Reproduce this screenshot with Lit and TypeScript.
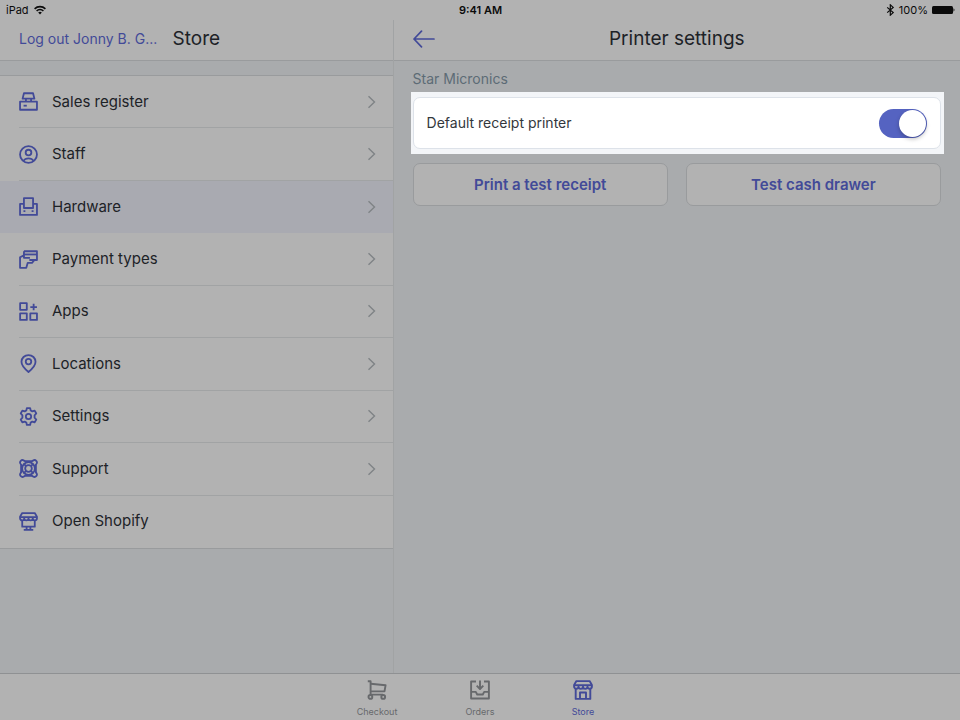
import { LitElement, html, css, svg } from "lit";
import { customElement, property, state } from "lit/decorators.js";
import { classMap } from "lit/directives/class-map.js";

// Icon artwork, drawn on a 20 by 20 grid with stroked lines.
const icons: Record<string, unknown> = {
  register: svg`<path d="M5.200 1.300h9.600l1.400 5.700H3.800z"/><path d="M7.300 7v3M12.700 7v3"/><path d="M1.100 10.200h17.800v8.500H1.100z"/><path d="M4.800 14.400h3.400"/>`,
  staff: svg`<circle cx="10" cy="10" r="8.900"/><circle cx="10" cy="8" r="3"/><path d="M4.600 16.700c1.200-1.900 3-2.700 5.400-2.700s4.200.8 5.400 2.700"/>`,
  hardware: svg`<path d="M5.200 11.600V1.100h9.600v10.500z"/><path d="M5 7.300H1.100v11.600h17.800V7.300H15"/><path d="M4.700 14.800h2M13.300 14.800h2"/>`,
  payment: svg`<path d="M5.200 1.300h13.700v9.200h-8"/><path d="M5.200 1.300v6.900h6.300"/><path d="M5.200 4.700h13.700"/><path d="M5.200 5.600L1.100 7.600v11.200h6.600l1.500-5.300h4.500l2.600-3"/>`,
  apps: svg`<path d="M1.200 1.200h7v7h-7zM1.200 11.900h7v7h-7zM11.900 11.900h7v7h-7z"/><path d="M15.400 1.800v7M11.900 5.300h7"/>`,
  locations: svg`<path d="M10 18.900S2.600 12.900 2.600 8.200a7.400 7.100 0 0 1 14.800 0c0 4.700-7.400 10.700-7.400 10.700z"/><circle cx="10" cy="8" r="2.900"/>`,
  settings: svg`<path d="M8.300 1.100h3.400l.6 2.500 1.700 1 2.500-.8 1.700 3-1.800 1.900v2.600l1.800 1.900-1.700 3-2.500-.8-1.700 1-.6 2.500H8.300l-.6-2.500-1.700-1-2.500.8-1.700-3 1.800-1.900V8.700L1.800 6.800l1.700-3 2.500.8 1.700-1z"/><circle cx="10" cy="10" r="2.800"/>`,
  support: svg`<circle cx="10" cy="10" r="6.700"/><circle cx="10" cy="10" r="3.500"/><path d="M6.200 3A2.600 2.600 0 1 0 3 6.200M13.800 3A2.600 2.600 0 1 1 17 6.200M6.200 17A2.600 2.600 0 1 1 3 13.800M13.800 17A2.600 2.600 0 1 0 17 13.800"/><path d="M6 2.200h8M6 17.800h8M2.200 6v8M17.800 6v8"/><path d="M5.200 5.200l2.200 2.200M14.800 5.200l-2.200 2.200M5.200 14.800l2.200-2.200M14.800 14.800l-2.200-2.200"/>`,
  shopify: svg`<path d="M3.400 1.100h13.200L18.900 5v1.600a2.200 2.200 0 0 1-4.400 0 2.200 2.200 0 0 1-4.500 0 2.200 2.200 0 0 1-4.500 0 2.200 2.200 0 0 1-4.400 0V5z"/><path d="M1.500 5.400h17"/><path d="M3.400 9v6.400h13.200V9"/><path d="M8 15.500v3M12 15.500v3M5 18.900h10"/>`,
  checkout: svg`<path d="M.8 1.200h2.800v13.400H16"/><path d="M3.600 3.800l15 1.400-1.100 6.200H3.600"/><circle cx="3.400" cy="16.900" r="1.900"/><circle cx="16.200" cy="16.900" r="1.900"/>`,
  orders: svg`<path d="M6 1.500H1.100v17h17.800v-17H14"/><path d="M1.200 11.900h4.600l1.400 2.600h5.600l1.400-2.600h4.600"/><path d="M10 .5v8M6.700 5.700L10 9l3.300-3.300"/>`,
  store: svg`<path d="M3.400 1.100h13.200L18.900 5v1.600a2.200 2.200 0 0 1-4.400 0 2.200 2.200 0 0 1-4.500 0 2.200 2.200 0 0 1-4.500 0 2.200 2.200 0 0 1-4.400 0V5z"/><path d="M1.500 5.200h17"/><path d="M2.700 9v9.900h14.600V9"/><path d="M7 18.500v-6h6v6"/>`,
};

@customElement("line-icon")
class LineIcon extends LitElement {
  @property() name = "";

  static styles = css`
    :host {
      display: block;
      width: 20px;
      height: 20px;
      flex: none;
    }
    .art {
      display: block;
      width: 100%;
      height: 100%;
      fill: none;
      stroke: currentColor;
      stroke-width: 1.9;
      stroke-linejoin: round;
    }
  `;

  render() {
    return html`<svg class="art" viewBox="0 0 20 20" aria-hidden="true">${icons[this.name]}</svg>`;
  }
}

interface Item {
  icon: string;
  label: string;
  external?: boolean;
}

const menu: Item[] = [
  { icon: "register", label: "Sales register" },
  { icon: "staff", label: "Staff" },
  { icon: "hardware", label: "Hardware" },
  { icon: "payment", label: "Payment types" },
  { icon: "apps", label: "Apps" },
  { icon: "locations", label: "Locations" },
  { icon: "settings", label: "Settings" },
  { icon: "support", label: "Support" },
  { icon: "shopify", label: "Open Shopify", external: true },
];

const tabs: Item[] = [
  { icon: "checkout", label: "Checkout" },
  { icon: "orders", label: "Orders" },
  { icon: "store", label: "Store" },
];

@customElement("app-root")
class AppRoot extends LitElement {
  @state() private selected = "Hardware";
  @state() private isDefault = true;

  static styles = css`
    :host {
      --surface: #b2b2b2;
      --ground: #a9abad;
      --line: #999b9d;
      --soft-line: #a1a3a4;
      --accent: #424a98;
      --ink: #1d2227;
      display: flex;
      flex-direction: column;
      min-height: 100vh;
      background: var(--ground);
      color: var(--ink);
      font-family: Inter, "Liberation Sans", sans-serif;
      font-size: 15px;
      line-height: 20px;
    }
    * {
      box-sizing: border-box;
    }
    button {
      font: inherit;
      color: inherit;
      margin: 0;
      padding: 0;
      border: 0;
      background: none;
      cursor: pointer;
    }
    a {
      color: inherit;
      text-decoration: none;
    }
    .status {
      display: grid;
      grid-template-columns: 1fr auto 1fr;
      align-items: center;
      height: 20px;
      padding: 0 5px 0 6px;
      background: var(--surface);
      color: #0b0b0b;
      font-size: 11px;
    }
    .status-side {
      display: flex;
      align-items: center;
      gap: 5px;
    }
    .status-end {
      justify-content: flex-end;
      gap: 4px;
    }
    .clock {
      font-weight: 600;
    }
    .glyph {
      display: block;
      flex: none;
    }
    .columns {
      flex: 1;
      display: grid;
      grid-template-columns: 41% 1fr;
    }
    .side {
      border-right: 1px solid var(--soft-line);
    }
    .bar {
      display: grid;
      grid-template-columns: 1fr auto 1fr;
      align-items: center;
      height: 41px;
      padding: 0 19px 2px;
      background: var(--surface);
      border-bottom: 1px solid var(--line);
    }
    .title {
      margin: 0;
      font-size: 19px;
      font-weight: 400;
      line-height: 24px;
    }
    .logout {
      justify-self: start;
      color: var(--accent);
      font-size: 14px;
      white-space: nowrap;
    }
    .back {
      justify-self: start;
      color: var(--accent);
    }
    .menu {
      display: grid;
      grid-auto-rows: 1fr;
      list-style: none;
      min-height: 474px;
      margin: 14px 0 0;
      padding: 0;
      background: var(--surface);
      border-top: 1px solid var(--line);
      border-bottom: 1px solid var(--line);
    }
    .entry {
      display: flex;
      padding-left: 19px;
    }
    .entry.selected {
      background: #a9aab1;
    }
    .link {
      flex: 1;
      display: flex;
      align-items: center;
      gap: 14px;
      padding-right: 17px;
      border-bottom: 1px solid var(--soft-line);
    }
    .entry:last-child .link,
    .entry.selected .link {
      border-bottom-color: transparent;
    }
    .link line-icon {
      width: 19px;
      height: 19px;
      color: var(--accent);
    }
    .name {
      flex: 1;
    }
    .chevron {
      color: #7f8386;
    }
    .content {
      padding: 8px 16px 0 17px;
    }
    .group {
      margin: 0 2px 3px;
      color: #5d6b76;
      font-size: 14px;
      font-weight: 400;
      line-height: 20px;
    }
    .spotlight {
      padding: 5px 3px 5px 2px;
      background: #f3f5f8;
    }
    .card {
      display: flex;
      align-items: center;
      justify-content: space-between;
      min-height: 52px;
      padding: 0 13px;
      background: #fff;
      border: 1px solid #dde2e9;
      border-radius: 7px;
      color: #33373c;
      font-size: 14px;
    }
    .toggle {
      appearance: none;
      display: flex;
      width: 48px;
      height: 29px;
      margin: 0;
      padding: 1px;
      border-radius: 15px;
      background: #c4cdd5;
      cursor: pointer;
    }
    .toggle:checked {
      justify-content: flex-end;
      background: #5563c1;
    }
    .toggle::before {
      content: "";
      width: 27px;
      height: 27px;
      border-radius: 50%;
      background: #fff;
      box-shadow: 0 2px 4px rgba(0, 0, 0, 0.25);
    }
    .actions {
      display: grid;
      grid-template-columns: 1fr 1fr;
      gap: 18px;
      margin: 9px 3px 0 2px;
    }
    .action {
      height: 43px;
      border: 1px solid var(--line);
      border-radius: 7px;
      background: var(--surface);
      color: var(--accent);
      font-weight: 600;
    }
    .tabs {
      display: flex;
      justify-content: center;
      height: 47px;
      background: var(--surface);
      border-top: 1px solid #8f9193;
    }
    .tab {
      display: flex;
      flex-direction: column;
      align-items: center;
      gap: 6px;
      width: 103px;
      padding-top: 6px;
      color: #67696c;
      font-size: 9px;
      line-height: 12px;
    }
    .tab.current {
      color: var(--accent);
    }
  `;

  render() {
    return html`
      <div class="status">
        <div class="status-side">
          <span>iPad</span>
          <svg class="glyph" width="12" height="10" viewBox="0 0 12 10" fill="none" stroke="currentColor" stroke-width="1.600" role="img" aria-label="Wi-Fi">
            <path d="M.6 3.800a7.800 7.800 0 0 1 10.800 0M2.600 6a4.900 4.900 0 0 1 6.800 0" />
            <path d="M6 9.500L4.200 7.600a2.600 2.600 0 0 1 3.600 0z" fill="currentColor" stroke="none" />
          </svg>
        </div>
        <span class="clock">9:41 AM</span>
        <div class="status-side status-end">
          <svg class="glyph" width="9" height="12" viewBox="0 0 9 12" fill="none" stroke="currentColor" stroke-width="1.200" role="img" aria-label="Bluetooth">
            <path d="M1.200 3.400l6 5.200-2.900 2.600V.8l2.900 2.600-6 5.200" />
          </svg>
          <span>100%</span>
          <svg class="glyph" width="23" height="10" viewBox="0 0 23 10" fill="currentColor" role="img" aria-label="Battery full">
            <rect x="0" y="1" width="21" height="8" rx="1.500" />
            <path d="M21.500 3.300q2 1.700 0 3.400z" />
          </svg>
        </div>
      </div>

      <div class="columns">
        <nav class="side" aria-label="Store">
          <header class="bar">
            <button class="logout">Log out Jonny B. G...</button>
            <h1 class="title">Store</h1>
          </header>
          <ul class="menu">
            ${menu.map(
              (item) => html`
                <li class=${classMap({ entry: true, selected: item.label === this.selected })}>
                  <a class="link" href="#" @click=${(e: Event) => this.choose(e, item)}>
                    <line-icon name=${item.icon}></line-icon>
                    <span class="name">${item.label}</span>
                    ${item.external
                      ? ""
                      : html`<svg class="glyph chevron" width="9" height="14" viewBox="0 0 9 14" fill="none" stroke="currentColor" stroke-width="1.400" aria-hidden="true">
                          <path d="M1.500 1.200L7.500 7l-6 5.800" />
                        </svg>`}
                  </a>
                </li>
              `
            )}
          </ul>
        </nav>

        <main>
          <header class="bar">
            <button class="back" aria-label="Back">
              <svg class="glyph" width="22" height="18" viewBox="0 0 22 18" fill="none" stroke="currentColor" stroke-width="1.700" stroke-linecap="round" stroke-linejoin="round" aria-hidden="true">
                <path d="M21 9H1M8.500 1.200L1 9l7.500 7.800" />
              </svg>
            </button>
            <h2 class="title">Printer settings</h2>
          </header>
          <section class="content">
            <h3 class="group">Star Micronics</h3>
            <div class="spotlight">
              <div class="card">
                <label for="default-printer">Default receipt printer</label>
                <input id="default-printer" class="toggle" type="checkbox" role="switch" .checked=${this.isDefault} @change=${this.toggle} />
              </div>
            </div>
            <div class="actions">
              <button class="action">Print a test receipt</button>
              <button class="action">Test cash drawer</button>
            </div>
          </section>
        </main>
      </div>

      <nav class="tabs" aria-label="Main">
        ${tabs.map(
          (tab) => html`
            <a class=${classMap({ tab: true, current: tab.label === "Store" })} href="#">
              <line-icon name=${tab.icon}></line-icon>
              <span>${tab.label}</span>
            </a>
          `
        )}
      </nav>
    `;
  }

  private choose(e: Event, item: Item) {
    e.preventDefault();
    if (!item.external) this.selected = item.label;
  }

  private toggle(e: Event) {
    this.isDefault = (e.target as HTMLInputElement).checked;
  }
}
